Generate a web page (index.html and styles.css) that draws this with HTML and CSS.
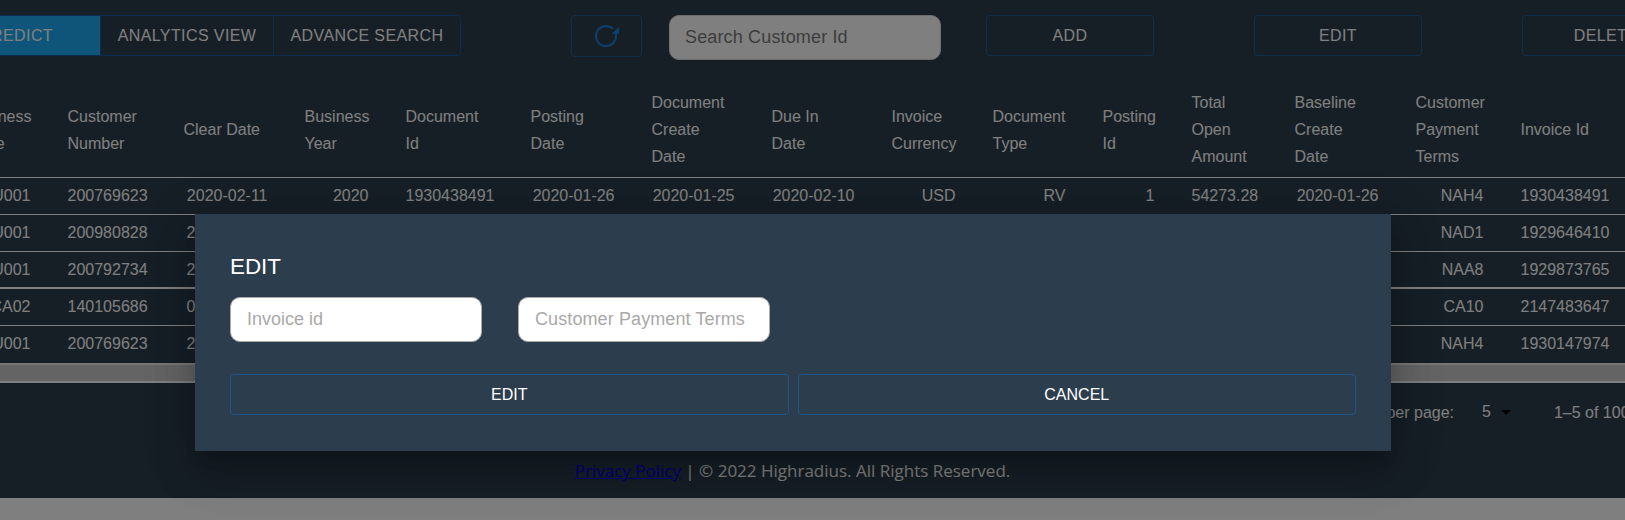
FILE: index.html
```html
<!DOCTYPE html>
<html lang="en">
<head>
<meta charset="utf-8">
<title>Invoices</title>
<link rel="stylesheet" href="styles.css">
</head>
<body>
<div class="app">
  <div class="sheet">
    <div class="toolbar">
      <div class="group">
        <button class="btn seg seg-active">PREDICT</button>
        <button class="btn seg seg-analytics">ANALYTICS VIEW</button>
        <button class="btn seg seg-advance">ADVANCE SEARCH</button>
      </div>
      <button class="btn refresh" aria-label="Refresh">
        <svg class="refresh-icon" viewBox="0 0 27 26"><path class="refresh-arc" d="M20 5.9A10 10 0 1 0 22.8 11"/><path class="refresh-head" d="M26 4V11H18.5Z"/></svg>
      </button>
      <input class="search" placeholder="Search Customer Id">
      <button class="btn action action-add">ADD</button>
      <button class="btn action action-gap">EDIT</button>
      <button class="btn action action-gap">DELETE</button>
    </div>

    <table class="grid">
      <colgroup>
        <col class="c1"><col class="c2"><col class="c3"><col class="c4"><col class="c5"><col class="c6"><col class="c7"><col class="c8"><col class="c9"><col class="c10"><col class="c11"><col class="c12"><col class="c13"><col class="c14"><col class="c15">
      </colgroup>
      <thead>
        <tr>
          <th>Business Code</th><th>Customer Number</th><th>Clear Date</th><th>Business Year</th><th>Document Id</th><th>Posting Date</th><th>Document Create Date</th><th>Due In Date</th><th>Invoice Currency</th><th>Document Type</th><th>Posting Id</th><th>Total Open Amount</th><th>Baseline Create Date</th><th>Customer Payment Terms</th><th>Invoice Id</th>
        </tr>
      </thead>
      <tbody>
        <tr>
          <td>U001</td><td>200769623</td><td>2020-02-11</td><td>2020</td><td>1930438491</td><td>2020-01-26</td><td>2020-01-25</td><td>2020-02-10</td><td>USD</td><td>RV</td><td>1</td><td>54273.28</td><td>2020-01-26</td><td>NAH4</td><td>1930438491</td>
        </tr>
        <tr>
          <td>U001</td><td>200980828</td><td class="peek">2</td><td></td><td></td><td></td><td></td><td></td><td></td><td></td><td></td><td></td><td></td><td>NAD1</td><td>1929646410</td>
        </tr>
        <tr class="thick">
          <td>U001</td><td>200792734</td><td class="peek">2</td><td></td><td></td><td></td><td></td><td></td><td></td><td></td><td></td><td></td><td></td><td>NAA8</td><td>1929873765</td>
        </tr>
        <tr>
          <td>CA02</td><td>140105686</td><td class="peek">0</td><td></td><td></td><td></td><td></td><td></td><td></td><td></td><td></td><td></td><td></td><td>CA10</td><td>2147483647</td>
        </tr>
        <tr class="last">
          <td>U001</td><td>200769623</td><td class="peek">2</td><td></td><td></td><td></td><td></td><td></td><td></td><td></td><td></td><td></td><td></td><td>NAH4</td><td>1930147974</td>
        </tr>
      </tbody>
    </table>
    <div class="hscroll"></div>

    <div class="pager">
      <span class="pager-label">Rows per page:</span>
      <span class="pager-size">5</span>
      <span class="pager-caret"></span>
      <span class="pager-range">1–5 of 100</span>
    </div>
    <p class="footer"><a href="#">Privacy Policy</a> | © 2022 Highradius. All Rights Reserved.</p>
  </div>
</div>

<div class="overlay">
  <div class="dialog">
    <h2 class="dialog-title">EDIT</h2>
    <div class="fields">
      <input class="field" placeholder="Invoice id">
      <input class="field field-terms" placeholder="Customer Payment Terms">
    </div>
    <div class="dialog-actions">
      <button class="btn dialog-btn">EDIT</button>
      <button class="btn dialog-btn">CANCEL</button>
    </div>
  </div>
</div>
</body>
</html>
```

FILE: styles.css
```css
* { box-sizing: border-box; }

html, body {
  margin: 0;
  height: 520px;
  overflow: hidden;
  background: #fff;
}

body {
  position: relative;
  font-family: "Liberation Sans", Arial, sans-serif;
  color: #fff;
}

.app {
  height: 498px;
  overflow: hidden;
  background: #2d3f4d;
}

.sheet {
  width: 1680px;
  margin-left: -49px;
}

/* toolbar */
.toolbar {
  display: flex;
  align-items: flex-start;
  padding: 15px 0 0;
  height: 82px;
}

.toolbar > * { flex: none; }

.btn {
  font: 16px/1 "Liberation Sans", Arial, sans-serif;
  letter-spacing: .4px;
  color: #fff;
  background: transparent;
  border: 1px solid #235f94;
  border-radius: 4px;
  height: 41px;
  padding: 0;
  text-align: center;
}

.group { display: flex; margin-left: -19px; }

.seg { border-radius: 0; flex: none; border-color: #1858a8; }
.seg-active {
  width: 169px;
  background: #1cabf2;
  border-radius: 4px 0 0 4px;
}
.seg-analytics { width: 174px; margin-left: -1px; }
.seg-advance { width: 188px; margin-left: -1px; border-radius: 0 4px 4px 0; }

.refresh {
  width: 71px;
  height: 42px;
  margin-left: 110px;
  display: flex;
  align-items: center;
  justify-content: center;
}

.refresh-icon {
  width: 27px;
  height: 26px;
  fill: none;
}
.refresh-arc { stroke: #1f7fd8; stroke-width: 2; }
.refresh-head { fill: #1f7fd8; }

.search {
  width: 272px;
  height: 45px;
  margin-left: 27px;
  padding: 0 15px;
  font: 18px "Liberation Sans", Arial, sans-serif;
  letter-spacing: .15px;
  background: #fff;
  border: 1px solid #ddd;
  border-radius: 10px;
}
.search::placeholder { color: #7b7b7b; opacity: 1; }

.action { width: 168px; }
.action-add { margin-left: 45px; }
.action-gap { margin-left: 100px; }

/* table */
.grid {
  width: 1680px;
  margin-left: -.5px;
  table-layout: fixed;
  border-collapse: collapse;
  font-size: 16px;
}

.c1 { width: 101px; }
.c2 { width: 116px; }
.c3 { width: 121px; }
.c4 { width: 101px; }
.c5 { width: 125px; }
.c6 { width: 121px; }
.c7 { width: 120px; }
.c8 { width: 120px; }
.c9 { width: 101px; }
.c10 { width: 110px; }
.c11 { width: 89px; }
.c12 { width: 103px; }
.c13 { width: 121px; }
.c14 { width: 105px; }
.c15 { width: 126px; }

th {
  height: 95px;
  padding: 1px 21px 0 16px;
  font-weight: 400;
  line-height: 27px;
  text-align: left;
  border-bottom: 1px solid #fff;
  vertical-align: middle;
}

td {
  height: 37px;
  padding: 0 21px 0 16px;
  line-height: 24px;
  text-align: right;
  border-bottom: 1px solid #fff;
  white-space: nowrap;
}

td.peek { text-align: left; padding-left: 19px; }
.thick td { border-bottom-width: 2px; padding-top: 2px; }
.last td { border-bottom: 0; height: 38px; }

.hscroll {
  height: 20px;
  background: #c8c8c8;
  border-top: 2px solid #efefef;
  border-bottom: 2px solid #fff;
}

/* pagination */
.pager {
  display: flex;
  align-items: center;
  height: 59px;
  padding-left: 1391px;
  font-size: 16px;
  white-space: nowrap;
}
.pager-label { width: 105px; text-align: right; }
.pager-size { margin-left: 35px; padding-bottom: 2px; }
.pager-caret {
  margin-left: 10px;
  border-left: 5px solid transparent;
  border-right: 5px solid transparent;
  border-top: 5px solid #000;
}
.pager-range { margin-left: 43px; }

.footer {
  margin: 0 0 0 49px;
  padding: 16px 40px 0 0;
  width: 1625px;
  text-align: center;
  font: 17px/26px "Open Sans", sans-serif;
}
.footer a { color: #0000ee; }

/* modal */
.overlay {
  position: absolute;
  inset: 0;
  background: rgba(0, 0, 0, .5);
}

.dialog {
  position: absolute;
  left: 195px;
  top: 214px;
  width: 1196px;
  height: 237px;
  padding: 36px 35px;
  background: #2c3d4e;
  box-shadow: 0 11px 15px -7px rgba(0,0,0,.2), 0 24px 38px 3px rgba(0,0,0,.14), 0 9px 46px 8px rgba(0,0,0,.12);
}

.dialog-title {
  margin: 0;
  font-size: 22.4px;
  font-weight: 400;
  line-height: 34px;
}

.fields {
  display: flex;
  gap: 36px;
  margin-top: 13px;
}

.field {
  width: 252px;
  height: 45px;
  padding: 0 16px;
  font: 18px "Liberation Sans", Arial, sans-serif;
  background: #fff;
  border: 1px solid #aaa;
  border-radius: 10px;
}
.field-terms { letter-spacing: .1px; }
.field::placeholder { color: #a9a9a9; opacity: 1; }

.dialog-actions {
  display: flex;
  gap: 9px;
  margin-top: 32px;
}

.dialog-btn {
  flex: 1;
  letter-spacing: 0;
  border-color: #23558a;
  border-width: 1.5px;
}
```
